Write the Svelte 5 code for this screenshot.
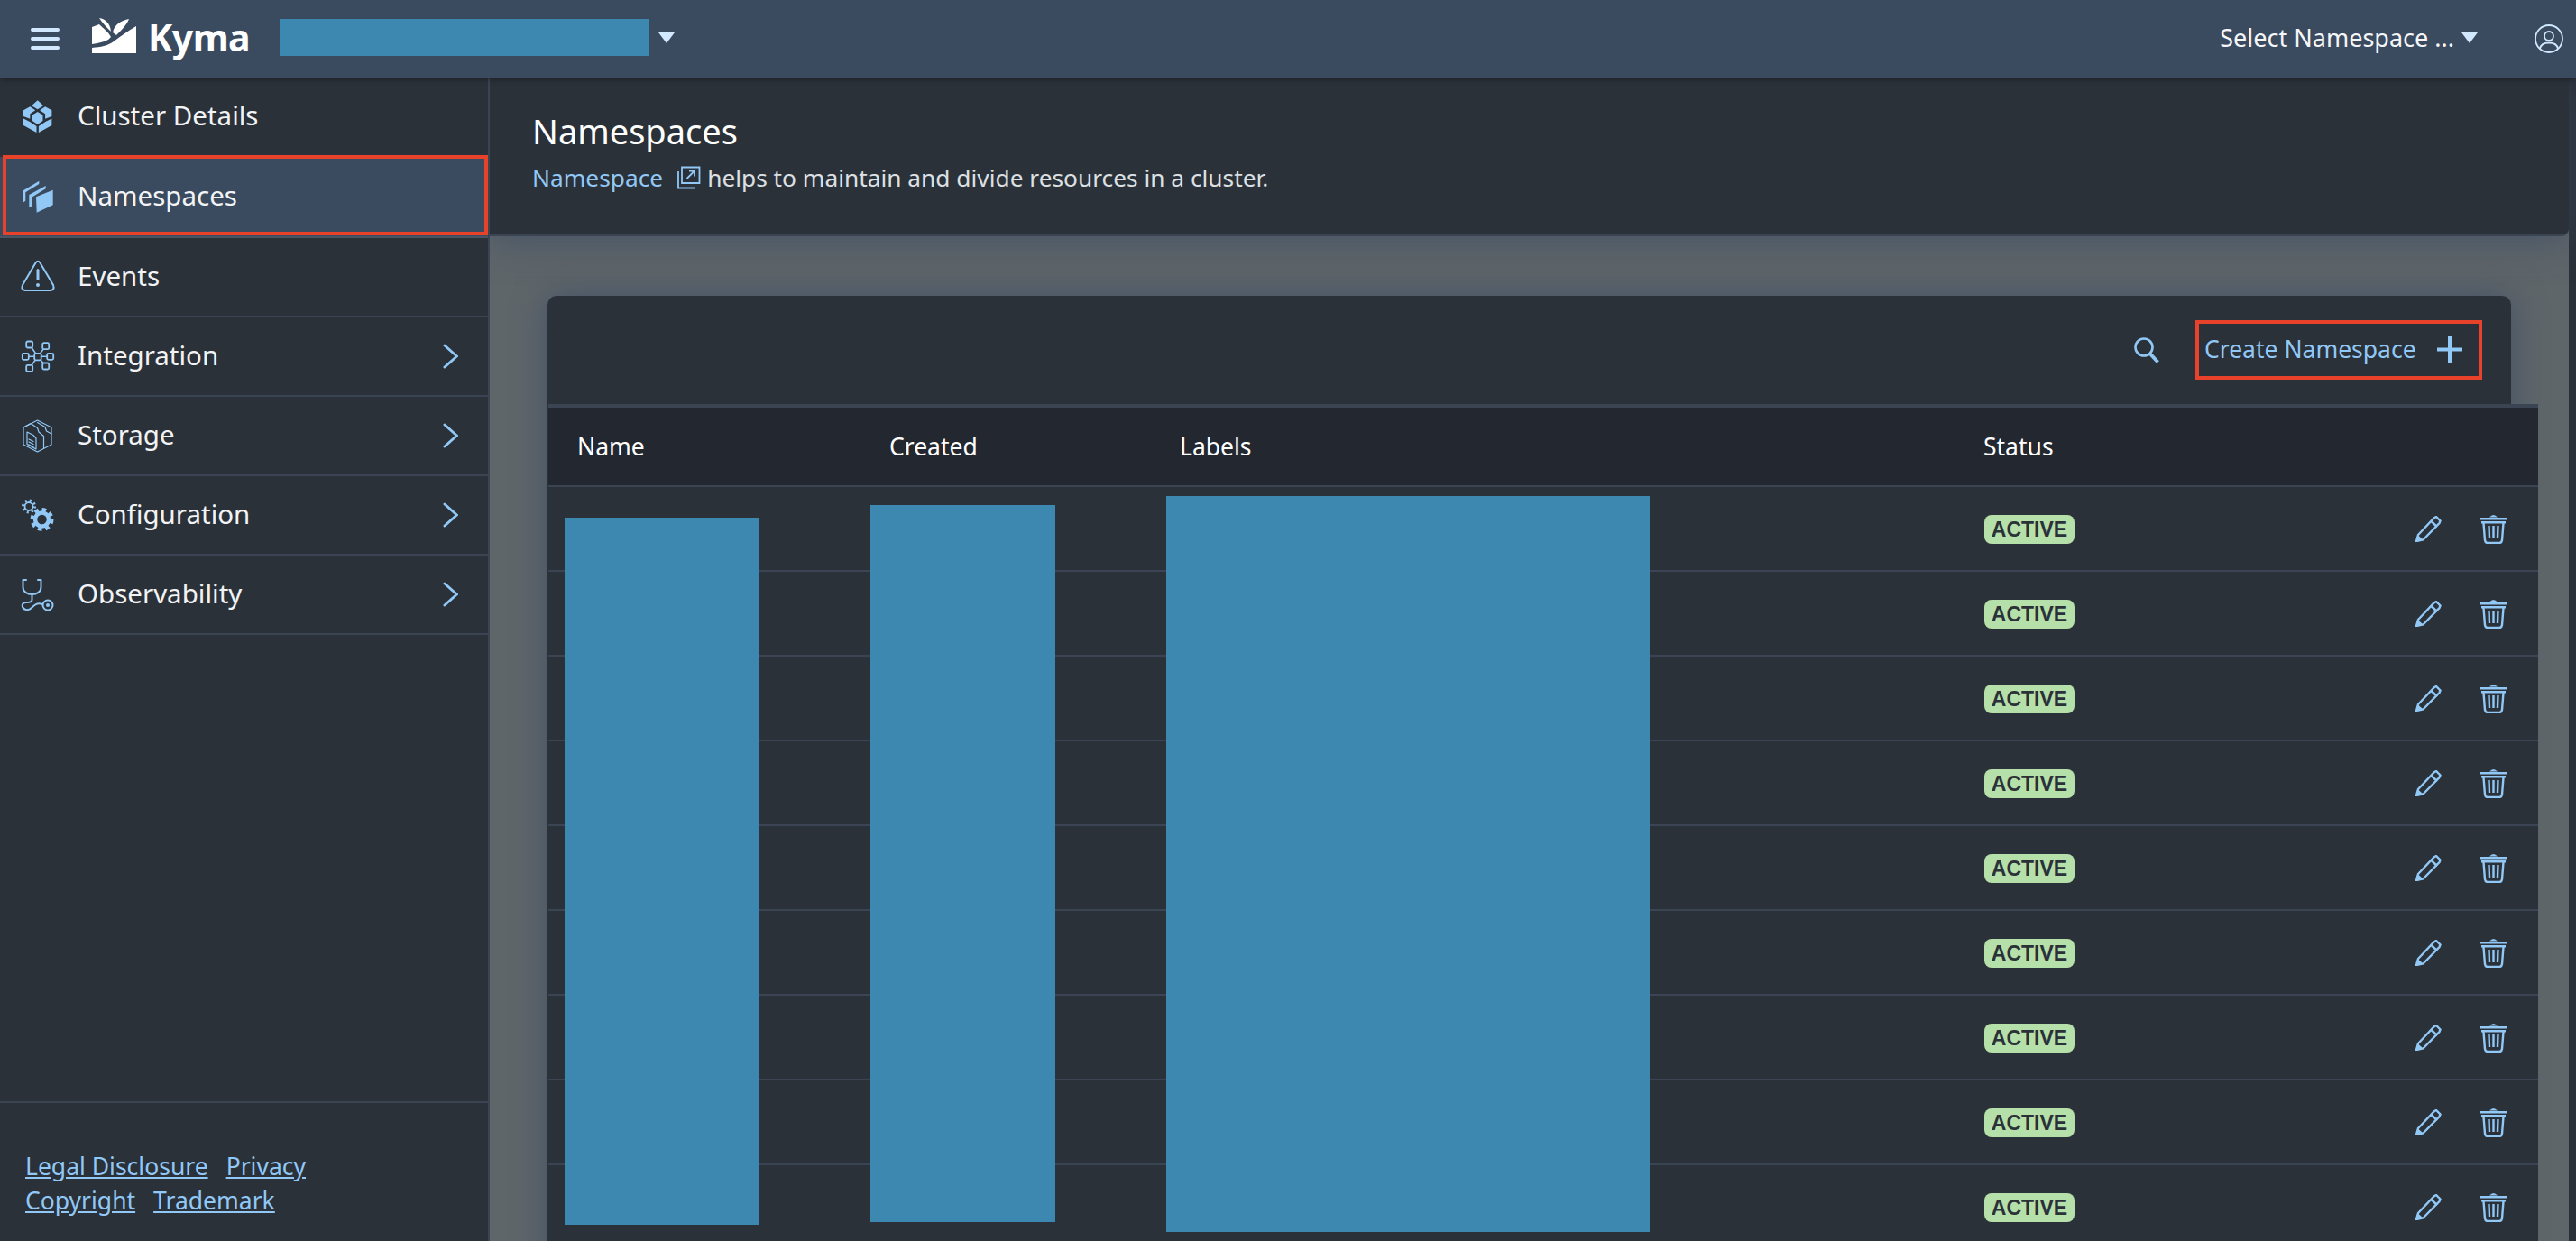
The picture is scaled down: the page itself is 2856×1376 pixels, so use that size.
<script>
	const navItems = [
		{ label: 'Cluster Details', icon: 'cluster' },
		{ label: 'Namespaces', icon: 'namespaces', active: true },
		{ label: 'Events', icon: 'events' },
		{ label: 'Integration', icon: 'integration', more: true },
		{ label: 'Storage', icon: 'storage', more: true },
		{ label: 'Configuration', icon: 'config', more: true },
		{ label: 'Observability', icon: 'observability', more: true }
	];
	const rows = Array.from({ length: 9 }, (_, i) => i);
	// node squares of the integration icon
	const nodes = [
		[10.7, 7],
		[28.7, 8.7],
		[6.3, 20.3],
		[33.7, 20.3],
		[10.7, 33.3],
		[28.7, 31]
	];
</script>

<div class="app">
	<header class="shellbar">
		<button class="burger" aria-label="Menu"><span></span><span></span><span></span></button>
		<svg class="logo" viewBox="0 0 49 39" aria-hidden="true">
			<path d="M0 39V33C10 32 17 31 24 26C32 20 40 14 49 9V39Z" />
			<path d="M0 10L8 7C13 12 18 15 21 21L18 24C12 27 6 28 0 29Z" />
			<path d="M8 0C14 1 20 5 21 15C16 10 12 6 8 0Z" />
			<path d="M41 1C39 7 32 14 27 19L23 16C25 6 33 3 41 1Z" />
		</svg>
		<span class="wordmark">Kyma</span>
		<div class="cluster-name"></div>
		<span class="caret"></span>
		<div class="spacer"></div>
		<span class="ns-select">Select Namespace ...</span>
		<span class="caret ns-caret"></span>
		<svg class="user" viewBox="0 0 32 32" aria-hidden="true">
			<circle cx="16" cy="16" r="15" />
			<circle cx="16" cy="13" r="5" />
			<path d="M6 27C7 22 11 20.500 16 20.500C21 20.500 25 22 26 27" />
		</svg>
	</header>

	<div class="body">
		<aside class="sidebar">
			<nav>
				{#each navItems as item}
					<div class="nav-item" class:active={item.active}>
						<svg class="nav-icon" viewBox="0 0 40 40" aria-hidden="true">
							{#if item.icon === 'cluster'}
								<g class="solid">
									<path d="M19.700 2.300L26.300 8.300L19.700 12.300L13 8.300Z" />
									<path d="M4 13.300L11.300 9.300L17.300 13.300L11.300 17.300V22.700L4 20Z" />
									<path d="M35.400 13.300L28.100 9.300L22.100 13.300L28.100 17.300V22.700L35.400 20Z" />
									<path d="M19.700 15L25.500 18.500V25L19.700 29L13.900 25V18.500Z" />
									<path d="M4 22.500L11 26L18.500 31V38L4 30Z" />
									<path d="M35.400 22.500L28.400 26L20.900 31V38L35.400 30Z" />
								</g>
							{:else if item.icon === 'namespaces'}
								<g class="solid">
									<path d="M3 13.700L21.300 2.700V6L6.300 15.300V24.700L3 27Z" />
									<path d="M10.300 18L28.700 8V11.300L14 20.300V30L10.300 32.300Z" />
									<path d="M18 20.300L36.700 12.700V29.300L18.700 37.700Z" />
								</g>
							{:else if item.icon === 'events'}
								<path class="line" d="M17.500 4.500Q20 1 22.500 4.500L37 29Q39 34.500 34 35H6Q1 34.500 3 29Z" />
								<g class="solid">
									<rect x="18.500" y="11" width="3" height="13" rx="1.500" />
									<circle cx="20" cy="29" r="2" />
								</g>
							{:else if item.icon === 'integration'}
								{#each nodes as [x, y]}
									<path class="line thin" d="M20 20.300L{x} {y}" />
									<rect class="node" x={x - 3.5} y={y - 3.5} width="7" height="7" rx="1.500" />
								{/each}
								<rect class="node" x="16.200" y="16.800" width="7.500" height="7.500" rx="1.500" />
							{:else if item.icon === 'storage'}
								<g class="line hair">
									<path d="M19.500 3L35 11V30L19.500 38L4 30V11Z" />
									<path d="M4 11L12 6.500L19.500 11.500L21 16L26.500 20.500V33.500" />
									<path d="M19.500 5.500L28 10.500L29.500 15L35 18" />
									<path d="M8 16L15 19.500L18 23V35L8 29.500Z" />
									<path d="M10 24L15 26.500M10 27L15 29.500M10 30L15 32.500" />
								</g>
							{:else if item.icon === 'config'}
								<circle class="ring" cx="10" cy="10.500" r="4.500" stroke-width="1.800" />
								<circle class="ring" cx="10" cy="10.500" r="6.500" stroke-width="3" stroke-dasharray="2 3.100" />
								<circle class="ring" cx="24.500" cy="25" r="7.500" stroke-width="4.500" />
								<circle class="ring" cx="24.500" cy="25" r="11" stroke-width="4" stroke-dasharray="4.600 4" />
							{:else if item.icon === 'observability'}
								<g class="line">
									<path d="M7 4H3.500V12C3.500 17 8 20 13.500 20C19 20 23.500 17 23.500 12V4H20" />
									<path d="M13.500 20V26C13.500 29 10 29 7 29C3 29 2 32 3 34C5 38 10 38 13 35C16 32 19 29 25 31" />
								</g>
								<circle class="line" cx="31" cy="32" r="5.500" />
								<circle class="solid" cx="31" cy="32" r="2" />
							{/if}
						</svg>
						<span class="nav-label">{item.label}</span>
						{#if item.more}
							<svg class="chevron" viewBox="0 0 18 28" aria-hidden="true"><path d="M2 2L15.500 14L2 26" /></svg>
						{/if}
						{#if item.active}<div class="marker nav-marker"></div>{/if}
					</div>
				{/each}
			</nav>
			<footer class="legal">
				<div class="legal-row"><a href="#legal">Legal Disclosure</a><a href="#privacy">Privacy</a></div>
				<div class="legal-row"><a href="#copyright">Copyright</a><a href="#trademark">Trademark</a></div>
			</footer>
		</aside>

		<main class="main">
			<section class="page-header">
				<h1>Namespaces</h1>
				<p>
					<a class="doc-link" href="#ns">Namespace</a>
					<svg class="ext-icon" viewBox="0 0 26 26" aria-hidden="true">
						<path d="M5 1.500H24.500V19H5Z" />
						<path d="M1 6V24.500H20" />
						<path d="M10.500 14L19 5.500M13 5.500H19V11.500" />
					</svg>
					<span class="desc">helps to maintain and divide resources in a cluster.</span>
				</p>
			</section>

			<div class="content">
				<section class="card">
					<div class="toolbar">
						<svg class="search" viewBox="0 0 28 29" aria-hidden="true">
							<circle cx="11" cy="11" r="9.500" />
							<path d="M18 18.500L26.500 27.500" />
						</svg>
						<div class="create">
							<span>Create Namespace</span>
							<svg class="plus" viewBox="0 0 28 29" aria-hidden="true"><path d="M0 14.500H28M14 0V29" /></svg>
							<div class="marker"></div>
						</div>
					</div>
					<div class="table-wrap">
						<table>
							<colgroup>
								<col class="c-name" /><col class="c-created" /><col class="c-labels" /><col class="c-status" /><col />
							</colgroup>
							<thead>
								<tr><th>Name</th><th>Created</th><th>Labels</th><th class="th-status">Status</th><th></th></tr>
							</thead>
							<tbody>
								{#each rows as row (row)}
									<tr>
										<td></td>
										<td></td>
										<td></td>
										<td><span class="badge">ACTIVE</span></td>
										<td>
											<div class="actions">
												<svg class="pencil" viewBox="0 0 29 29" aria-hidden="true">
													<path d="M1 28L3 21L20.500 2.500L23 1L27.500 5.500L26.500 8L8.500 26.500Z" />
													<path d="M17.500 6L24 12" />
													<path class="tip" d="M0.500 28.500L2.500 21L8.500 26.500Z" />
												</svg>
												<svg class="trash" viewBox="0 0 29 33" aria-hidden="true">
													<path class="tip" d="M10 3.500Q14.500 -1.500 19 3.500Z" />
													<path class="tip" d="M0 4H29V6.500H0ZM1 8H28V10.500H1Z" />
													<path d="M3.500 10L5 29Q5.500 32 8 32H21Q23.500 32 24 29L25.500 10" />
													<path d="M9.500 13L10 27M14.500 13V27M19.500 13L19 27" />
												</svg>
											</div>
										</td>
									</tr>
								{/each}
							</tbody>
						</table>
						<div class="redact r-name"></div>
						<div class="redact r-created"></div>
						<div class="redact r-labels"></div>
					</div>
				</section>
			</div>
		</main>
		<div class="gutter"></div>
	</div>
</div>

<style>
	:global(body) {
		margin: 0;
		background: #2b3139;
		overflow: hidden;
	}
	.app {
		width: 2856px;
		height: 1376px;
		display: flex;
		flex-direction: column;
		overflow: hidden;
		font-family: 'Noto Sans', 'Open Sans', sans-serif;
		color: #f2f3f4;
	}
	.shellbar {
		height: 86px;
		flex: none;
		display: flex;
		align-items: center;
		background: #3a4a5f;
		position: relative;
		z-index: 2;
		box-shadow: 0 2px 6px rgba(0, 0, 0, 0.35);
	}
	.burger {
		margin-left: 34px;
		width: 32px;
		height: 24px;
		padding: 0;
		border: 0;
		background: none;
		display: flex;
		flex-direction: column;
		justify-content: space-between;
	}
	.burger span {
		height: 4px;
		border-radius: 2px;
		background: #d1e8ff;
	}
	.logo {
		width: 49px;
		height: 39px;
		margin-left: 36px;
		margin-top: -8px;
		fill: #fff;
	}
	.wordmark {
		margin: -5px 0 0 13px;
		width: 146px;
		font-size: 41px;
		font-weight: 700;
		color: #fff;
		letter-spacing: -0.5px;
	}
	.cluster-name {
		width: 409px;
		height: 41px;
		margin-top: -3px;
		background: #3d88b0;
	}
	.caret {
		margin-left: 11px;
		width: 0;
		height: 0;
		border-left: 9.500px solid transparent;
		border-right: 9.500px solid transparent;
		border-top: 12px solid #d1e8ff;
		margin-top: -2px;
	}
	.spacer {
		flex: 1;
	}
	.ns-select {
		font-size: 27px;
		margin-top: -3px;
		color: #f5f6f7;
	}
	.ns-caret {
		margin-left: 8px;
	}
	.user {
		width: 32px;
		height: 32px;
		margin: 0 14px 0 63px;
		fill: none;
		stroke: #d1e8ff;
		stroke-width: 1.800;
	}
	.body {
		flex: 1;
		min-height: 0;
		display: flex;
	}
	.sidebar {
		width: 543px;
		flex: none;
		box-sizing: border-box;
		border-right: 2px solid #3a4452;
		background: #2b3139;
		display: flex;
		flex-direction: column;
		position: relative;
		z-index: 1;
	}
	nav {
		flex: 1;
	}
	.nav-item {
		height: 88px;
		box-sizing: border-box;
		border-bottom: 2px solid #3a4452;
		display: flex;
		align-items: center;
		padding-left: 22px;
		position: relative;
		font-size: 29.500px;
		color: #f2f3f4;
	}
	.nav-item:first-child {
		border-bottom-color: transparent;
	}
	.nav-item.active {
		height: 90px;
		background: #3a4a5f;
		border-bottom-color: #4a5563;
	}
	.nav-icon {
		width: 40px;
		height: 40px;
		flex: none;
		margin-right: 24px;
	}
	.nav-label {
		margin-top: -3px;
	}
	.solid {
		fill: #91c8f6;
	}
	.line {
		fill: none;
		stroke: #91c8f6;
		stroke-width: 2;
		stroke-linecap: round;
		stroke-linejoin: round;
	}
	.thin {
		stroke-width: 1.500;
	}
	.hair {
		stroke-width: 1.200;
	}
	.node {
		fill: #2b3139;
		stroke: #91c8f6;
		stroke-width: 1.800;
	}
	.ring {
		fill: none;
		stroke: #91c8f6;
	}
	.chevron {
		position: absolute;
		left: 491px;
		top: 29px;
		width: 18px;
		height: 28px;
		fill: none;
		stroke: #91c8f6;
		stroke-width: 3;
		stroke-linecap: round;
		stroke-linejoin: round;
	}
	.marker {
		position: absolute;
		inset: 0;
		border: 4px solid #e8432a;
		pointer-events: none;
	}
	.nav-marker {
		inset: -2px 0 1px 3px;
	}
	.legal {
		height: 155px;
		flex: none;
		box-sizing: border-box;
		border-top: 2px solid #3a4452;
		padding: 51px 0 0 28px;
		font-size: 26.500px;
		line-height: 38px;
	}
	.legal-row {
		display: flex;
		gap: 20px;
	}
	.legal a {
		color: #91c8f6;
	}
	.main {
		flex: 1;
		min-width: 0;
		display: flex;
		flex-direction: column;
		background: #5f666a;
	}
	.page-header {
		height: 176px;
		flex: none;
		box-sizing: border-box;
		padding: 33px 0 0 47px;
		background: #2b3139;
		border-bottom: 2px solid #3a4452;
		border-bottom-right-radius: 8px;
		box-shadow: 0 6px 40px rgba(58, 74, 100, 0.65);
		position: relative;
	}
	h1 {
		margin: 0;
		font-size: 38px;
		line-height: 52px;
		font-weight: 400;
		color: #fff;
	}
	.page-header p {
		margin: 6px 0 0;
		display: flex;
		align-items: center;
		font-size: 26.300px;
		line-height: 40px;
	}
	.doc-link {
		color: #91c8f6;
		text-decoration: none;
	}
	.ext-icon {
		width: 26px;
		height: 26px;
		margin: 0 7px 0 16px;
		fill: none;
		stroke: #91c8f6;
		stroke-width: 1.800;
	}
	.desc {
		color: #dde0e3;
	}
	.content {
		flex: 1;
		min-height: 0;
		padding: 66px 0 0 64px;
	}
	.card {
		width: 2177px;
		height: 1100px;
		background: #2b3139;
		border-radius: 10px 10px 0 0;
		box-shadow: 0 0 36px rgba(58, 74, 100, 0.75);
	}
	.toolbar {
		height: 120px;
		box-sizing: border-box;
		display: flex;
		align-items: center;
		justify-content: flex-end;
		padding: 0 32px 0 0;
	}
	.search {
		width: 28px;
		height: 29px;
		margin-right: 40px;
		fill: none;
		stroke: #91c8f6;
		stroke-width: 2.600;
	}
	.search path {
		stroke-width: 4;
	}
	.create {
		position: relative;
		width: 318px;
		height: 66px;
		box-sizing: border-box;
		display: flex;
		align-items: center;
		padding: 0 0 2px 10px;
		color: #91c8f6;
		font-size: 26.500px;
	}
	.plus {
		position: absolute;
		left: 268px;
		top: 18px;
		width: 28px;
		height: 29px;
		fill: none;
		stroke: #91c8f6;
		stroke-width: 4;
	}
	.table-wrap {
		position: relative;
		width: 2206px;
		margin-left: 1px;
		box-sizing: border-box;
		border-top: 4px solid #3a4452;
		background: #2b3139;
	}
	table {
		width: 100%;
		table-layout: fixed;
		border-collapse: separate;
		border-spacing: 0;
	}
	.c-name {
		width: 346px;
	}
	.c-created {
		width: 322px;
	}
	.c-labels {
		width: 889px;
	}
	.c-status {
		width: 400px;
	}
	th {
		height: 88px;
		box-sizing: border-box;
		padding: 0 0 0 32px;
		background: #23272f;
		border-bottom: 2px solid #3a4452;
		font-size: 26.500px;
		font-weight: 400;
		text-align: left;
		color: #fff;
	}
	.th-status {
		padding-left: 34px;
	}
	td {
		height: 94px;
		box-sizing: border-box;
		padding: 1px 0 0 35px;
		border-bottom: 2px solid #3a4452;
	}
	.badge {
		display: inline-block;
		box-sizing: border-box;
		width: 100px;
		height: 32px;
		line-height: 32px;
		border-radius: 8px;
		background: #b6e0a9;
		color: #2b3139;
		font-family: 'Liberation Sans', Arial, sans-serif;
		font-size: 23px;
		font-weight: 700;
		text-align: center;
		vertical-align: middle;
	}
	.actions {
		display: flex;
		align-items: center;
		justify-content: flex-end;
		gap: 43px;
		padding-right: 35px;
	}
	.pencil,
	.trash {
		width: 29px;
		fill: none;
		stroke: #91c8f6;
		stroke-width: 2.400;
	}
	.pencil {
		height: 29px;
	}
	.trash {
		height: 33px;
	}
	.tip {
		fill: #91c8f6;
		stroke: none;
	}
	.redact {
		position: absolute;
		background: #3d88b0;
	}
	.r-name {
		left: 18px;
		top: 122px;
		width: 216px;
		height: 784px;
	}
	.r-created {
		left: 357px;
		top: 108px;
		width: 205px;
		height: 795px;
	}
	.r-labels {
		left: 685px;
		top: 98px;
		width: 536px;
		height: 816px;
	}
	.gutter {
		width: 8px;
		flex: none;
		background: #2b3139;
	}
</style>
